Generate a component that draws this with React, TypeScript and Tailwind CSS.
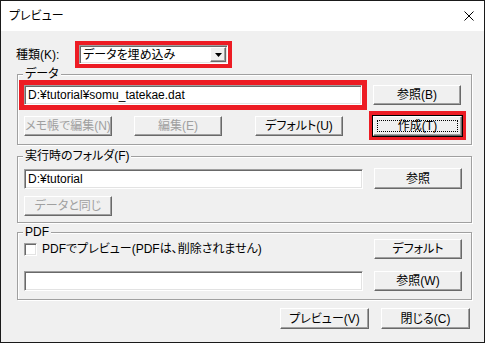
import React from "react";

const RED = "bg-[#ed1c24]";

function Btn({
  label,
  w = "w-[88px]",
  h = "h-[20px]",
  disabled = false,
  focused = false,
}: {
  label: string;
  w?: string;
  h?: string;
  disabled?: boolean;
  focused?: boolean;
}) {
  return (
    <div
      className={`${w} ${h} shrink-0 flex items-center justify-center bg-[#f0f0f0] border border-t-white border-l-white border-r-[#696969] border-b-[#696969] shadow-[inset_-1px_-1px_0_#a0a0a0] leading-none ${
        disabled ? "text-[#a0a0a0]" : "text-black"
      } ${focused ? "outline outline-1 outline-black" : ""}`}
    >
      {focused ? (
        <span className="w-[calc(100%-6px)] h-[calc(100%-6px)] flex items-center justify-center border border-dotted border-black">
          {label}
        </span>
      ) : (
        label
      )}
    </div>
  );
}

function Field({ value = "", w = "w-[339px]", h = "h-[20px]" }: { value?: string; w?: string; h?: string }) {
  return (
    <div
      className={`${w} ${h} shrink-0 bg-white border border-t-[#a0a0a0] border-l-[#a0a0a0] border-r-white border-b-white shadow-[inset_1px_1px_0_#696969,inset_-1px_-1px_0_#e3e3e3] flex items-center pl-[3px] leading-none`}
    >
      {value}
    </div>
  );
}

function Group({
  label,
  className = "",
  children,
}: {
  label: string;
  className?: string;
  children: React.ReactNode;
}) {
  return (
    <fieldset
      className={`ml-[1px] w-[455px] border border-[#a0a0a0] shadow-[inset_1px_1px_0_#fff,1px_1px_0_#fff] pl-[6px] ${className}`}
    >
      <legend className="-ml-[1px] px-[2px] leading-[12px] bg-[#f0f0f0]">{label}</legend>
      {children}
    </fieldset>
  );
}

export default function App() {
  return (
    <div className="w-[485px] h-[343px] border border-[#1a1a1a] bg-[#f0f0f0] flex flex-col text-[12px] text-black font-['Liberation_Sans','Noto_Sans_CJK_JP',sans-serif] [font-feature-settings:'palt']">
      {/* Title bar */}
      <div className="h-[30px] shrink-0 bg-white flex items-center justify-between pl-[8px] pr-[10px]">
        <span className="text-[12px]">プレビュー</span>
        <svg width="10" height="10" viewBox="0 0 10 10" className="shrink-0">
          <path d="M0.5 0.5 L9.5 9.5 M9.5 0.5 L0.5 9.5" stroke="#000" strokeWidth="1" />
        </svg>
      </div>

      {/* Body */}
      <div className="flex flex-col pl-[15px] pr-[14px] pt-[10px]">
        {/* 種類 */}
        <div className="flex items-center h-[27px]">
          <span className="w-[59px] shrink-0">種類(K):</span>
          <div className={`${RED} w-[157px] h-[27px] p-[4px]`}>
            <div className="w-full h-[19px] bg-white border border-t-[#a0a0a0] border-l-[#a0a0a0] border-r-white border-b-white shadow-[inset_1px_1px_0_#696969,inset_-1px_-1px_0_#e3e3e3] flex items-center justify-between pl-[3px] pr-[1px]">
              <span className="leading-none">データを埋め込み</span>
              <div className="w-[16px] h-[15px] bg-[#f0f0f0] border border-t-white border-l-white border-r-[#696969] border-b-[#696969] shadow-[inset_-1px_-1px_0_#a0a0a0] flex items-center justify-center">
                <svg width="7" height="4" viewBox="0 0 7 4">
                  <path d="M0 0 H7 L3.5 4 Z" fill="#000" />
                </svg>
              </div>
            </div>
          </div>
        </div>

        {/* データ */}
        <Group label="データ" className="pb-[4px]">
          <div className="flex items-center h-[30px]">
            <div className={`${RED} -ml-[5px] w-[348px] h-[30px] p-[5px]`}>
              <Field value="D:¥tutorial¥somu_tatekae.dat" w="w-[338px]" />
            </div>
            <div className="ml-[6px]">
              <Btn label="参照(B)" />
            </div>
          </div>
          <div className="flex items-center h-[29px] mt-[1px]">
            <Btn label="メモ帳で編集(N)" disabled />
            <div className="ml-[22px]">
              <Btn label="編集(E)" disabled />
            </div>
            <div className="ml-[33px]">
              <Btn label="デフォルト(U)" />
            </div>
            <div className={`${RED} ml-[26px] w-[97px] h-[29px] p-[4px] flex items-center`}>
              <Btn label="作成(T)" w="w-[89px]" h="h-[20px]" focused />
            </div>
          </div>
        </Group>

        {/* 実行時のフォルダ */}
        <Group label="実行時のフォルダ(F)" className="mt-[5px] pt-[6px] pb-[6px]">
          <div className="flex items-center h-[21px]">
            <Field value="D:¥tutorial" />
            <div className="ml-[11px]">
              <Btn label="参照" h="h-[21px]" />
            </div>
          </div>
          <div className="mt-[7px]">
            <Btn label="データと同じ" disabled />
          </div>
        </Group>

        {/* PDF */}
        <Group label="PDF" className="mt-[3px] pt-[1px] pb-[8px]">
          <div className="flex items-center h-[20px]">
            <div className="w-[13px] h-[13px] shrink-0 bg-white border border-t-[#a0a0a0] border-l-[#a0a0a0] border-r-white border-b-white shadow-[inset_1px_1px_0_#696969,inset_-1px_-1px_0_#e3e3e3]" />
            <span className="ml-[5px] w-[332px] leading-none">PDFでプレビュー(PDFは、削除されません)</span>
            <Btn label="デフォルト" />
          </div>
          <div className="flex items-center h-[21px] mt-[11px]">
            <Field />
            <div className="ml-[11px]">
              <Btn label="参照(W)" />
            </div>
          </div>
        </Group>

        {/* Bottom buttons */}
        <div className="flex justify-end gap-[12px] mt-[8px]">
          <Btn label="プレビュー(V)" w="w-[89px]" h="h-[21px]" />
          <Btn label="閉じる(C)" w="w-[89px]" h="h-[21px]" />
        </div>
      </div>
    </div>
  );
}
